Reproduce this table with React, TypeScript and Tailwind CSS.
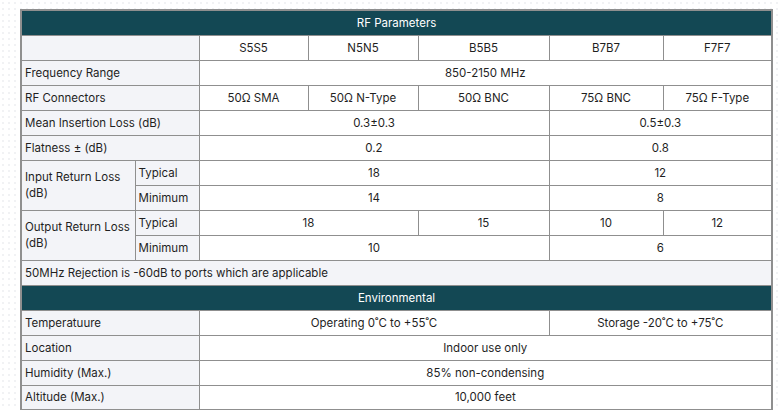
const label = 'bg-[#f3f4f8] text-left pl-[3px] pr-1 border border-[#8f8f8f] font-normal';
const cell = 'bg-white text-center border border-[#8f8f8f] font-normal';
const band = 'bg-[#134854] text-white text-center border border-[#8f8f8f] font-normal';

export default function App() {
  return (
    <div className="min-h-[410px] w-[780px] bg-white bg-[radial-gradient(#f1f2f4_1px,transparent_1px)] bg-[size:6px_6px] pt-[9px] pl-[20px]">
      <table
        className="table-fixed border-collapse border-2 border-[#8f8f8f] w-[751px] text-[11.5px] leading-4 text-[#1f1f1f]"
        style={{ fontFamily: 'Inter, "Noto Sans", sans-serif' }}
      >
        <colgroup>
          <col className="w-[114px]" />
          <col className="w-[64px]" />
          <col className="w-[109px]" />
          <col className="w-[110px]" />
          <col className="w-[131px]" />
          <col className="w-[114px]" />
          <col className="w-[109px]" />
        </colgroup>
        <tbody>
          <tr className="h-[25px]">
            <th colSpan={7} className={band}>RF Parameters</th>
          </tr>
          <tr className="h-[25px]">
            <td colSpan={2} className={label}></td>
            <td className={cell}>S5S5</td>
            <td className={cell}>N5N5</td>
            <td className={cell}>B5B5</td>
            <td className={cell}>B7B7</td>
            <td className={cell}>F7F7</td>
          </tr>
          <tr className="h-[25px]">
            <td colSpan={2} className={label}>Frequency Range</td>
            <td colSpan={5} className={cell}>850-2150 MHz</td>
          </tr>
          <tr className="h-[25px]">
            <td colSpan={2} className={label}>RF Connectors</td>
            <td className={cell}>50Ω SMA</td>
            <td className={cell}>50Ω N-Type</td>
            <td className={cell}>50Ω BNC</td>
            <td className={cell}>75Ω BNC</td>
            <td className={cell}>75Ω F-Type</td>
          </tr>
          <tr className="h-[25px]">
            <td colSpan={2} className={label}>Mean Insertion Loss (dB)</td>
            <td colSpan={3} className={cell}>0.3±0.3</td>
            <td colSpan={2} className={cell}>0.5±0.3</td>
          </tr>
          <tr className="h-[25px]">
            <td colSpan={2} className={label}>Flatness ± (dB)</td>
            <td colSpan={3} className={cell}>0.2</td>
            <td colSpan={2} className={cell}>0.8</td>
          </tr>
          <tr className="h-[25px]">
            <td rowSpan={2} className={label}>Input Return Loss (dB)</td>
            <td className={label}>Typical</td>
            <td colSpan={3} className={cell}>18</td>
            <td colSpan={2} className={cell}>12</td>
          </tr>
          <tr className="h-[25px]">
            <td className={label}>Minimum</td>
            <td colSpan={3} className={cell}>14</td>
            <td colSpan={2} className={cell}>8</td>
          </tr>
          <tr className="h-[25px]">
            <td rowSpan={2} className={label}>Output Return Loss (dB)</td>
            <td className={label}>Typical</td>
            <td colSpan={2} className={cell}>18</td>
            <td className={cell}>15</td>
            <td className={cell}>10</td>
            <td className={cell}>12</td>
          </tr>
          <tr className="h-[25px]">
            <td className={label}>Minimum</td>
            <td colSpan={3} className={cell}>10</td>
            <td colSpan={2} className={cell}>6</td>
          </tr>
          <tr className="h-[25px]">
            <td colSpan={7} className={label}>50MHz Rejection is -60dB to ports which are applicable</td>
          </tr>
          <tr className="h-[25px]">
            <th colSpan={7} className={band}>Environmental</th>
          </tr>
          <tr className="h-[25px]">
            <td colSpan={2} className={label}>Temperatuure</td>
            <td colSpan={3} className={cell}>Operating 0˚C to +55˚C</td>
            <td colSpan={2} className={cell}>Storage -20˚C to +75˚C</td>
          </tr>
          <tr className="h-[25px]">
            <td colSpan={2} className={label}>Location</td>
            <td colSpan={5} className={cell}>Indoor use only</td>
          </tr>
          <tr className="h-[25px]">
            <td colSpan={2} className={label}>Humidity (Max.)</td>
            <td colSpan={5} className={cell}>85% non-condensing</td>
          </tr>
          <tr className="h-[25px]">
            <td colSpan={2} className={label}>Altitude (Max.)</td>
            <td colSpan={5} className={cell}>10,000 feet</td>
          </tr>
        </tbody>
      </table>
    </div>
  );
}
